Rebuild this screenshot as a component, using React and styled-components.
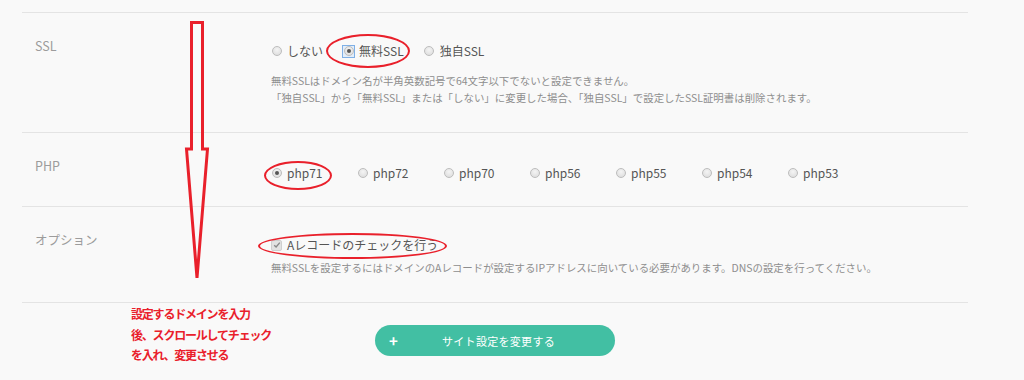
import React from "react";
import styled, { createGlobalStyle, css } from "styled-components";

const GlobalStyle = createGlobalStyle`
  html, body {
    margin: 0;
    padding: 0;
    background: #f9f9f9;
  }
  body {
    font-family: "Noto Sans CJK JP", "Noto Sans", sans-serif;
    color: #555;
  }
`;

const red = "#e9202b";

const phpVersions = ["php71", "php72", "php70", "php56", "php55", "php54", "php53"];

const Radio = ({ checked, focused, children }) => (
  <Option>
    <RadioBox $focused={focused}>
      <RadioDot $checked={checked} />
    </RadioBox>
    <span>{children}</span>
  </Option>
);

const App = () => {
  return (
    <>
      <GlobalStyle />
      <Page>
        <Settings>
          <Row>
            <Label>SSL</Label>
            <Content>
              <Group $gap={20}>
                <Radio>しない</Radio>
                <Marked $w={84} $h={34} $x={-17} $y={-17}>
                  <Radio checked focused>無料SSL</Radio>
                </Marked>
                <Radio>独自SSL</Radio>
              </Group>
              <Help $top={12}>
                無料SSLはドメイン名が半角英数記号で64文字以下でないと設定できません。
                <br />
                「独自SSL」から「無料SSL」または「しない」に変更した場合、「独自SSL」で設定したSSL証明書は削除されます。
              </Help>
            </Content>
          </Row>

          <Row>
            <Label>PHP</Label>
            <Content>
              <Group $gap={0}>
                {phpVersions.map((v, i) =>
                  i === 0 ? (
                    <PhpItem key={v}>
                      <Marked $w={68} $h={29} $x={-7} $y={-12}>
                        <Radio checked>{v}</Radio>
                      </Marked>
                    </PhpItem>
                  ) : (
                    <PhpItem key={v}>
                      <Radio>{v}</Radio>
                    </PhpItem>
                  )
                )}
              </Group>
            </Content>
          </Row>

          <Row>
            <Label>オプション</Label>
            <Content>
              <Group $gap={0}>
                <Marked $w={189} $h={26} $x={-13} $y={-12}>
                  <Option>
                    <CheckBox>
                      <svg width="8" height="8" viewBox="0 0 8 8">
                        <path d="M1.2 4.2 L3.1 6 L6.8 1.6" fill="none" stroke="#8a8a8a" strokeWidth="1.4" />
                      </svg>
                    </CheckBox>
                    <span>Aレコードのチェックを行う</span>
                  </Option>
                </Marked>
              </Group>
              <Help $top={5}>
                無料SSLを設定するにはドメインのAレコードが設定するIPアドレスに向いている必要があります。DNSの設定を行ってください。
              </Help>
            </Content>
          </Row>

          <ActionRow>
            <Note>
              設定するドメインを入力
              <br />
              後、スクロールしてチェック
              <br />
              を入れ、変更させる
            </Note>
            <SubmitButton type="button">
              <Plus>+</Plus>
              <ButtonText>サイト設定を変更する</ButtonText>
            </SubmitButton>
          </ActionRow>

          <Arrow width="30" height="262" viewBox="0 0 30 262">
            <path
              d="M8.5 1.5 L19.5 1.5 L19.5 128 L24.5 128 L14 257 L3.5 128 L8.5 128 Z"
              fill="none"
              stroke={red}
              strokeWidth="3"
              strokeLinejoin="miter"
            />
          </Arrow>
        </Settings>
      </Page>
    </>
  );
};

const Page = styled.div`
  width: 1024px;
  height: 380px;
  overflow: hidden;
  padding-top: 12px;
  box-sizing: border-box;
`;

const Settings = styled.div`
  position: relative;
  margin-left: 22px;
  width: 946px;
`;

const Row = styled.div`
  display: grid;
  grid-template-columns: 249px 1fr;
  border-top: 1px solid #e4e4e4;
  padding-bottom: 26px;
`;

const Label = styled.div`
  padding: 24px 0 0 13px;
  font-size: 12.5px;
  line-height: 18px;
  color: #9c9c9c;
`;

const Content = styled.div`
  padding-top: 29px;
`;

const Group = styled.div`
  display: flex;
  align-items: center;
  gap: ${(p) => p.$gap}px;
  height: 18px;
`;

const Option = styled.label`
  display: inline-flex;
  align-items: center;
  gap: 5px;
  font-size: 12px;
  line-height: 18px;
  color: #555;
  white-space: nowrap;
`;

const PhpItem = styled.div`
  width: 86px;
`;

const RadioBox = styled.span`
  display: inline-flex;
  align-items: center;
  justify-content: center;
  width: 11px;
  height: 11px;
  box-sizing: border-box;
  ${(p) =>
    p.$focused &&
    css`
      outline: 1px solid #7fb0e6;
      outline-offset: 0;
      background: #e3eefa;
    `}
`;

const RadioDot = styled.span`
  display: block;
  width: 10px;
  height: 10px;
  box-sizing: border-box;
  border-radius: 50%;
  border: 1px solid #bdbdbd;
  background: radial-gradient(circle at 50% 35%, #f4f4f4 0%, #dadada 100%);
  position: relative;

  ${(p) =>
    p.$checked &&
    css`
      &::after {
        content: "";
        position: absolute;
        left: 2px;
        top: 2px;
        width: 4px;
        height: 4px;
        border-radius: 50%;
        background: #555;
      }
    `}
`;

const CheckBox = styled.span`
  display: inline-flex;
  align-items: center;
  justify-content: center;
  width: 9px;
  height: 9px;
  border: 1px solid #cfcfcf;
  border-radius: 2px;
  background: #e2e2e2;
`;

const Marked = styled.span`
  position: relative;
  display: inline-flex;

  &::after {
    content: "";
    position: absolute;
    left: ${(p) => p.$x}px;
    top: 50%;
    margin-top: ${(p) => p.$y}px;
    width: ${(p) => p.$w}px;
    height: ${(p) => p.$h}px;
    box-sizing: border-box;
    border: 2.5px solid ${red};
    border-radius: 50%;
    pointer-events: none;
  }
`;

const Help = styled.p`
  margin: ${(p) => p.$top}px 0 0;
  font-size: 10.45px;
  line-height: 17px;
  color: #8e8e8e;
  white-space: nowrap;
`;

const ActionRow = styled.div`
  position: relative;
  display: grid;
  grid-template-columns: 249px 1fr;
  border-top: 1px solid #e4e4e4;
  padding-top: 22px;
`;

const Note = styled.div`
  position: absolute;
  left: 109px;
  top: 1px;
  font-size: 12px;
  font-weight: 700;
  line-height: 20.5px;
  letter-spacing: -1.2px;
  color: ${red};
`;

const SubmitButton = styled.button`
  grid-column: 2;
  margin-left: 104px;
  display: flex;
  align-items: center;
  width: 240px;
  height: 31px;
  padding: 0 15px 0 14px;
  border: none;
  border-radius: 16px;
  background: #42bfa3;
  color: #fff;
  font-family: "Noto Sans CJK JP", "Noto Sans", sans-serif;
  cursor: pointer;
`;

const Plus = styled.span`
  width: 8px;
  font-size: 15px;
  font-weight: 700;
  line-height: 1;
`;

const ButtonText = styled.span`
  flex: 1;
  text-align: center;
  font-size: 11px;
  letter-spacing: 0.3px;
`;

const Arrow = styled.svg`
  position: absolute;
  left: 161px;
  top: 9px;
  pointer-events: none;
`;

export default App;
